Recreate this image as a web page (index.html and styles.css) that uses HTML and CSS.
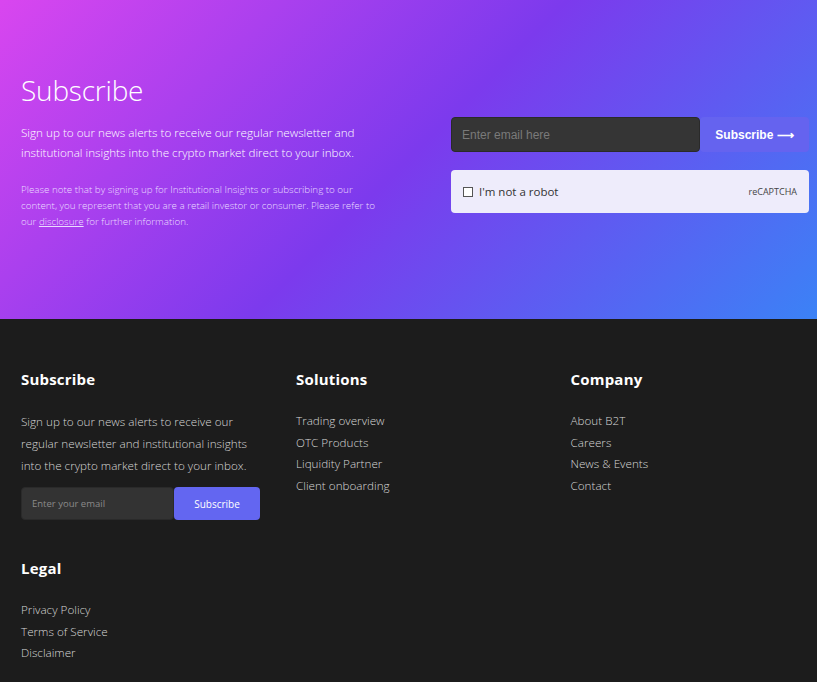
FILE: index.html
```html
<!DOCTYPE html>
<html>
<head>
<meta charset="utf-8">
<link rel="stylesheet" href="styles.css">
</head>
<body>
<section class="hero">
  <div class="hero-left">
    <h1 class="hero-title">Subscribe</h1>
    <p class="hero-lead">Sign up to our news alerts to receive our regular newsletter and institutional insights into the crypto market direct to your inbox.</p>
    <p class="hero-note">Please note that by signing up for Institutional Insights or subscribing to our content, you represent that you are a retail investor or consumer. Please refer to our <a href="#" class="note-link">disclosure</a> for further information.</p>
  </div>
  <div class="hero-right">
    <form class="hero-form">
      <input class="hero-input" type="email" placeholder="Enter email here">
      <button class="hero-btn" type="button">Subscribe ⟶</button>
    </form>
    <div class="captcha">
      <label class="captcha-label"><span class="captcha-box"></span>I'm not a robot</label>
      <span class="captcha-brand">reCAPTCHA</span>
    </div>
  </div>
</section>
<footer class="footer">
  <div class="col">
    <h3 class="col-title">Subscribe</h3>
    <p class="col-text">Sign up to our news alerts to receive our regular newsletter and institutional insights into the crypto market direct to your inbox.</p>
    <form class="foot-form">
      <input class="foot-input" type="email" placeholder="Enter your email">
      <button class="foot-btn" type="button">Subscribe</button>
    </form>
  </div>
  <div class="col">
    <h3 class="col-title">Solutions</h3>
    <ul class="links">
      <li><a href="#">Trading overview</a></li>
      <li><a href="#">OTC Products</a></li>
      <li><a href="#">Liquidity Partner</a></li>
      <li><a href="#">Client onboarding</a></li>
    </ul>
  </div>
  <div class="col">
    <h3 class="col-title">Company</h3>
    <ul class="links">
      <li><a href="#">About B2T</a></li>
      <li><a href="#">Careers</a></li>
      <li><a href="#">News &amp; Events</a></li>
      <li><a href="#">Contact</a></li>
    </ul>
  </div>
  <div class="col">
    <h3 class="col-title">Legal</h3>
    <ul class="links">
      <li><a href="#">Privacy Policy</a></li>
      <li><a href="#">Terms of Service</a></li>
      <li><a href="#">Disclaimer</a></li>
    </ul>
  </div>
</footer>
</body>
</html>
```
FILE: styles.css
```css
* { box-sizing: border-box; }
html, body { margin: 0; padding: 0; }
body {
  font-family: "Open Sans", "Noto Sans", sans-serif;
  background: #1c1c1c;
  color: #fff;
}
.hero {
  height: 319px;
  background: linear-gradient(135deg, #d946ef 0%, #7c3aed 50%, #3b82f6 100%);
  display: flex;
  justify-content: space-between;
  padding: 70px 8px 0 21px;
}
.hero-left { width: 366px; }
.hero-title {
  margin: 0;
  font-size: 28px;
  font-weight: 300;
  line-height: 40px;
  letter-spacing: -0.2px;
}
.hero-lead {
  margin: 12px 0 0;
  font-size: 11.7px;
  font-weight: 300;
  line-height: 20px;
}
.hero-note {
  margin: 20px 0 0;
  font-size: 9.8px;
  font-weight: 300;
  line-height: 16px;
  color: #eadcff;
}
.note-link { color: #eadcff; text-decoration: underline; }
.hero-right {
  width: 358px;
  padding-top: 47px;
}
.hero-form { display: flex; margin: 0; }
.hero-input {
  width: 249px;
  height: 35px;
  background: #353535;
  border: 1px solid #2a2a2a;
  border-radius: 4px;
  padding: 0 10px;
  font-family: "Liberation Sans", Arial, sans-serif;
  font-size: 12px;
  color: #fff;
}
.hero-input::placeholder { color: #7a7a7a; }
.hero-btn {
  flex: 1;
  height: 35px;
  border: none;
  border-radius: 4px;
  background: #6563ef;
  color: #fff;
  font-family: "Liberation Sans", Arial, sans-serif;
  font-weight: 700;
  font-size: 12px;
}
.captcha {
  margin-top: 18px;
  height: 43px;
  background: #eeecfb;
  border-radius: 4px;
  display: flex;
  align-items: center;
  justify-content: space-between;
  padding: 0 12px;
  color: #333;
}
.captcha-label {
  display: flex;
  align-items: center;
  gap: 6px;
  font-size: 11.5px;
  font-weight: 400;
}
.captcha-box {
  width: 10px;
  height: 10px;
  border: 1px solid #555;
  background: #fff;
}
.captcha-brand { font-size: 9px; color: #444; }
.footer {
  display: grid;
  grid-template-columns: repeat(3, 1fr);
  column-gap: 36px;
  row-gap: 38px;
  padding: 50px 8px 40px 21px;
  height: 363px;
  align-content: start;
}
.col-title {
  margin: 0 0 21px;
  font-size: 15px;
  font-weight: 700;
  line-height: 20px;
  color: #fff;
  letter-spacing: 0.2px;
}
.col-text {
  margin: 0;
  font-size: 11.7px;
  font-weight: 300;
  line-height: 22px;
  color: #d6d6d6;
}
.foot-form { display: flex; margin: 11px 0 0; }
.foot-input {
  width: 153px;
  height: 33px;
  background: #333;
  border: 1px solid #2a2a2a;
  border-radius: 4px;
  padding: 0 10px;
  font-family: inherit;
  font-size: 9.5px;
  color: #fff;
}
.foot-input::placeholder { color: #8a8a8a; }
.foot-btn {
  width: 86px;
  height: 33px;
  border: none;
  border-radius: 4px;
  background: #6366f1;
  color: #fff;
  font-family: inherit;
  font-size: 10px;
}
.links { list-style: none; margin: 0; padding: 0; }
.links li { line-height: 21.7px; font-size: 11.7px; font-weight: 300; }
.links a { color: #d6d6d6; text-decoration: none; }
```
